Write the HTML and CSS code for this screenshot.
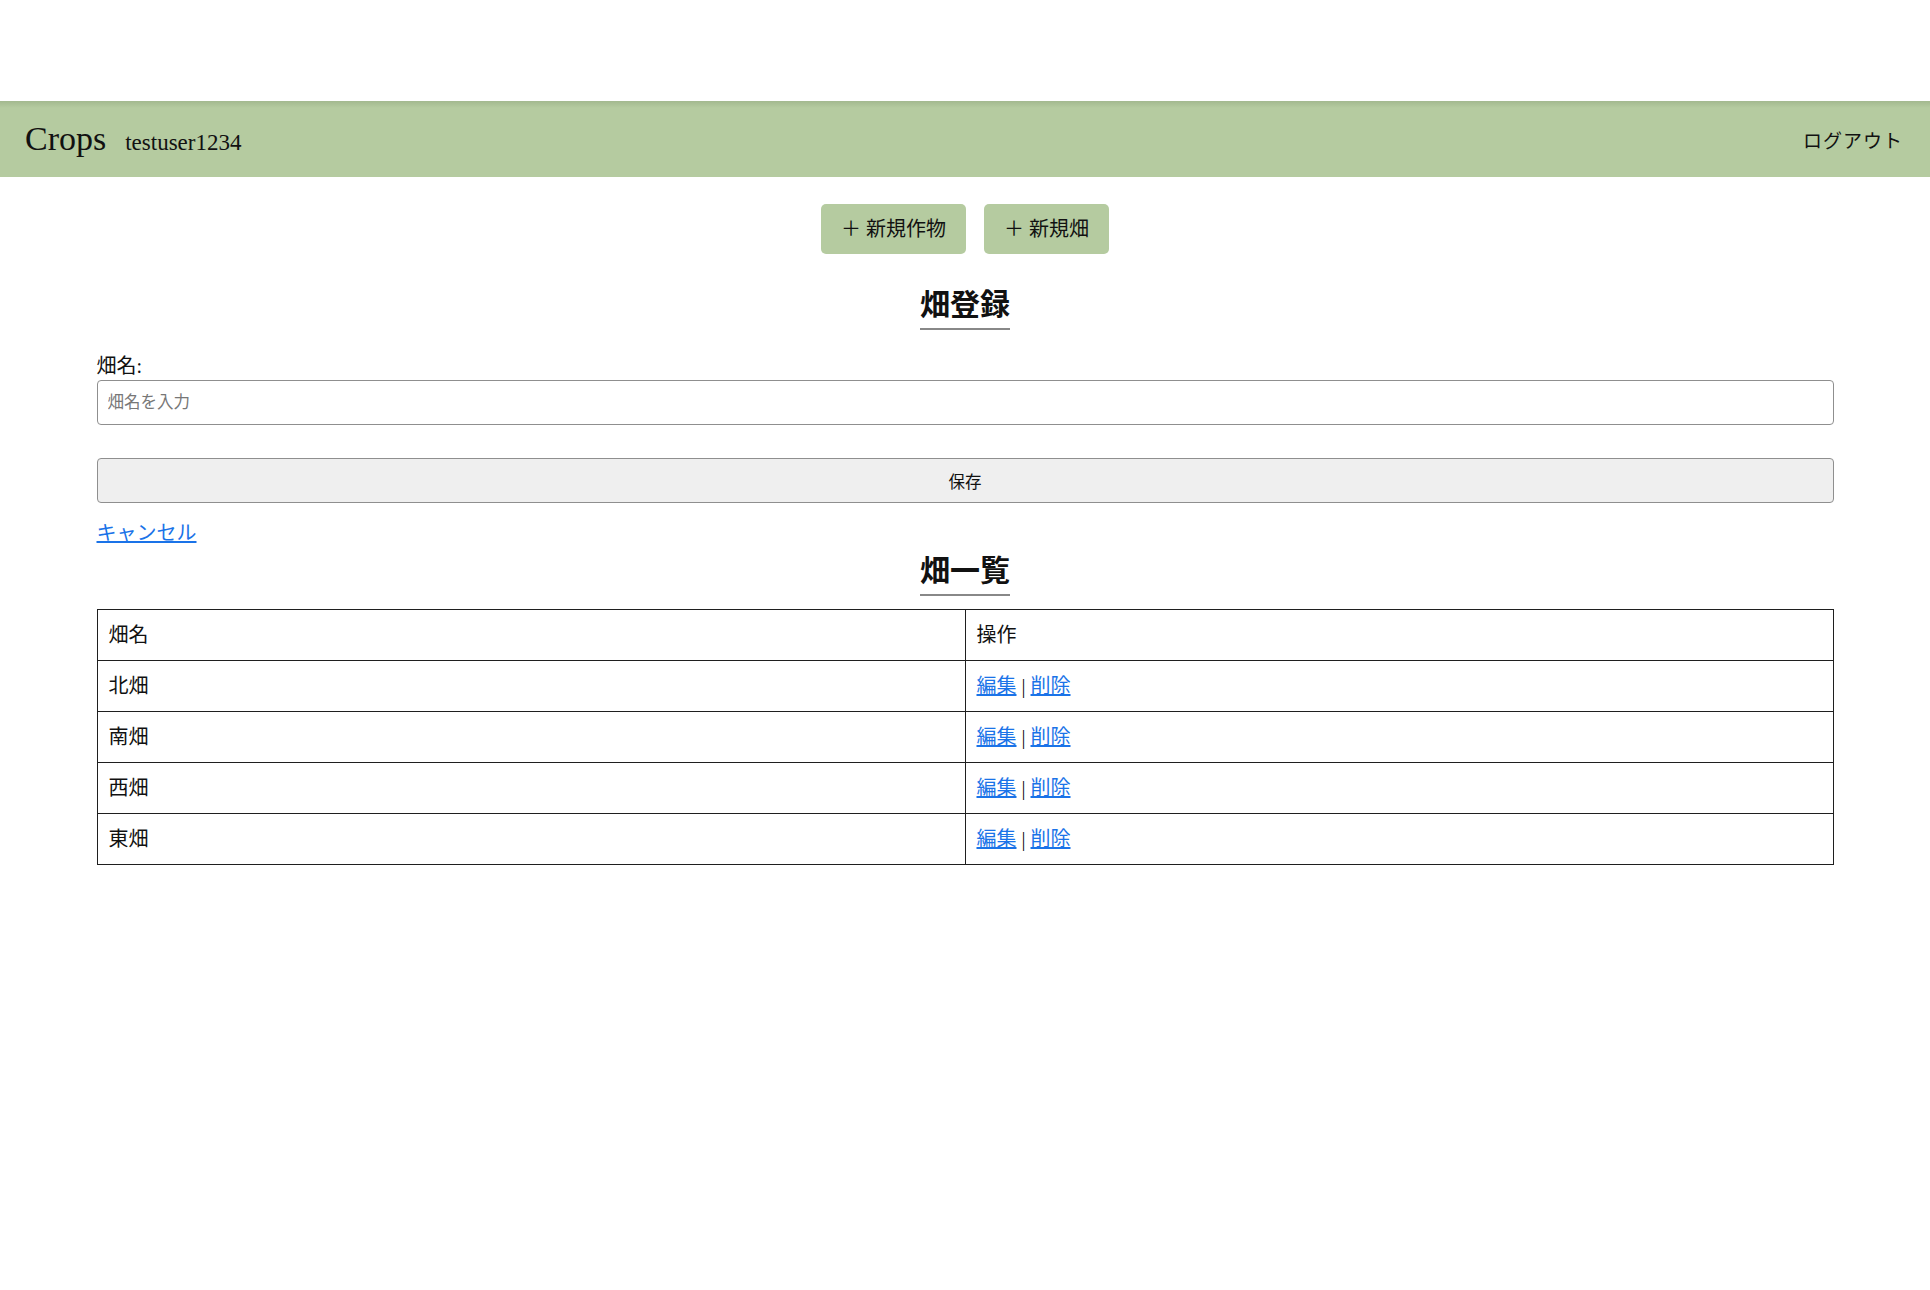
FILE: index.html
```html
<html>
    <head>
        <meta charset="utf-8">
        <link rel="stylesheet" href="styles.css">
    </head>
    <body>
        <header class="header">
            <div class="brand">
                <span class="logo">Crops</span>
                <span class="userName">testuser1234</span>
            </div>
            <a class="logout" href="#">ログアウト</a>
        </header>

        <div class="actions">
            <a class="actionButton" href="#">＋ 新規作物</a>
            <a class="actionButton" href="#">＋ 新規畑</a>
        </div>

        <div class="container">
            <div class="titleWrap">
                <h2 class="primaryTitle">畑登録</h2>
            </div>
            <form class="fieldForm" onsubmit="return false">
                <label for="fieldName">畑名:</label>
                <input id="fieldName" type="text" placeholder="畑名を入力">
                <button class="saveButton" type="submit">保存</button>
            </form>
            <a class="cancelLink" href="#">キャンセル</a>

            <div class="titleWrap listTitle">
                <h2 class="primaryTitle">畑一覧</h2>
            </div>
            <table class="fieldTable">
                <thead>
                    <tr>
                        <th>畑名</th>
                        <th>操作</th>
                    </tr>
                </thead>
                <tbody>
                    <tr>
                        <td>北畑</td>
                        <td><a href="#">編集</a> | <a href="#">削除</a></td>
                    </tr>
                    <tr>
                        <td>南畑</td>
                        <td><a href="#">編集</a> | <a href="#">削除</a></td>
                    </tr>
                    <tr>
                        <td>西畑</td>
                        <td><a href="#">編集</a> | <a href="#">削除</a></td>
                    </tr>
                    <tr>
                        <td>東畑</td>
                        <td><a href="#">編集</a> | <a href="#">削除</a></td>
                    </tr>
                </tbody>
            </table>
        </div>
    </body>
</html>
```

FILE: styles.css
```css
body {
    margin: 0;
    padding-top: 101px;
    font-family: "Liberation Serif", "Noto Sans CJK JP", serif;
    font-size: 20px;
    color: #111;
    background: #fff;
}

/* header */
.header {
    height: 76px;
    display: flex;
    align-items: center;
    justify-content: space-between;
    padding: 0 27px 0 25px;
    background: linear-gradient(#a3b98f, #b5cba0 7px);
}
.brand {
    display: flex;
    align-items: baseline;
    gap: 19px;
}
.logo {
    font-size: 34px;
}
.userName {
    font-size: 23px;
}
.logout {
    color: #111;
    text-decoration: none;
    font-size: 19px;
    letter-spacing: 1px;
}

/* new buttons */
.actions {
    display: flex;
    justify-content: center;
    gap: 18px;
    margin-top: 27px;
}
.actionButton {
    display: block;
    padding: 12px 20px;
    line-height: 26px;
    background: #b5cba0;
    border-radius: 5px;
    color: #111;
    text-decoration: none;
    font-size: 20px;
}

/* main */
.container {
    width: 90%;
    margin: 0 auto;
}
.titleWrap {
    text-align: center;
    margin-top: 33px;
}
.primaryTitle {
    display: inline-block;
    margin: 0;
    font-size: 30px;
    line-height: 36px;
    padding-bottom: 5px;
    border-bottom: 2px solid #888;
}
.fieldForm {
    margin: 24px 0 0;
    display: flex;
    flex-direction: column;
}
.fieldForm > label {
    line-height: 25px;
}
.fieldForm > input {
    margin-top: 1px;
    height: 45px;
    box-sizing: border-box;
    padding: 0 10px;
    border: 1.5px solid #8f8f8f;
    border-radius: 4px;
    font-family: inherit;
    font-size: 16.5px;
    outline: none;
}
.fieldForm > input::placeholder {
    color: #777;
}
.saveButton {
    margin-top: 33px;
    height: 45px;
    background: #efefef;
    border: 1.5px solid #8f8f8f;
    border-radius: 4px;
    font-family: inherit;
    font-size: 16.5px;
    color: #111;
}
.cancelLink {
    display: inline-block;
    margin-top: 18px;
    line-height: 25px;
    color: #1a73e8;
}
.listTitle {
    margin-top: 7px;
}

/* table */
.fieldTable {
    width: 100%;
    margin-top: 13px;
    border-collapse: collapse;
    table-layout: fixed;
    font-size: 20px;
}
.fieldTable th,
.fieldTable td {
    border: 1.5px solid #1f1f1f;
    padding: 12px 11px;
    line-height: 26px;
    text-align: left;
    font-weight: normal;
}
.fieldTable a {
    color: #1a73e8;
}
```
